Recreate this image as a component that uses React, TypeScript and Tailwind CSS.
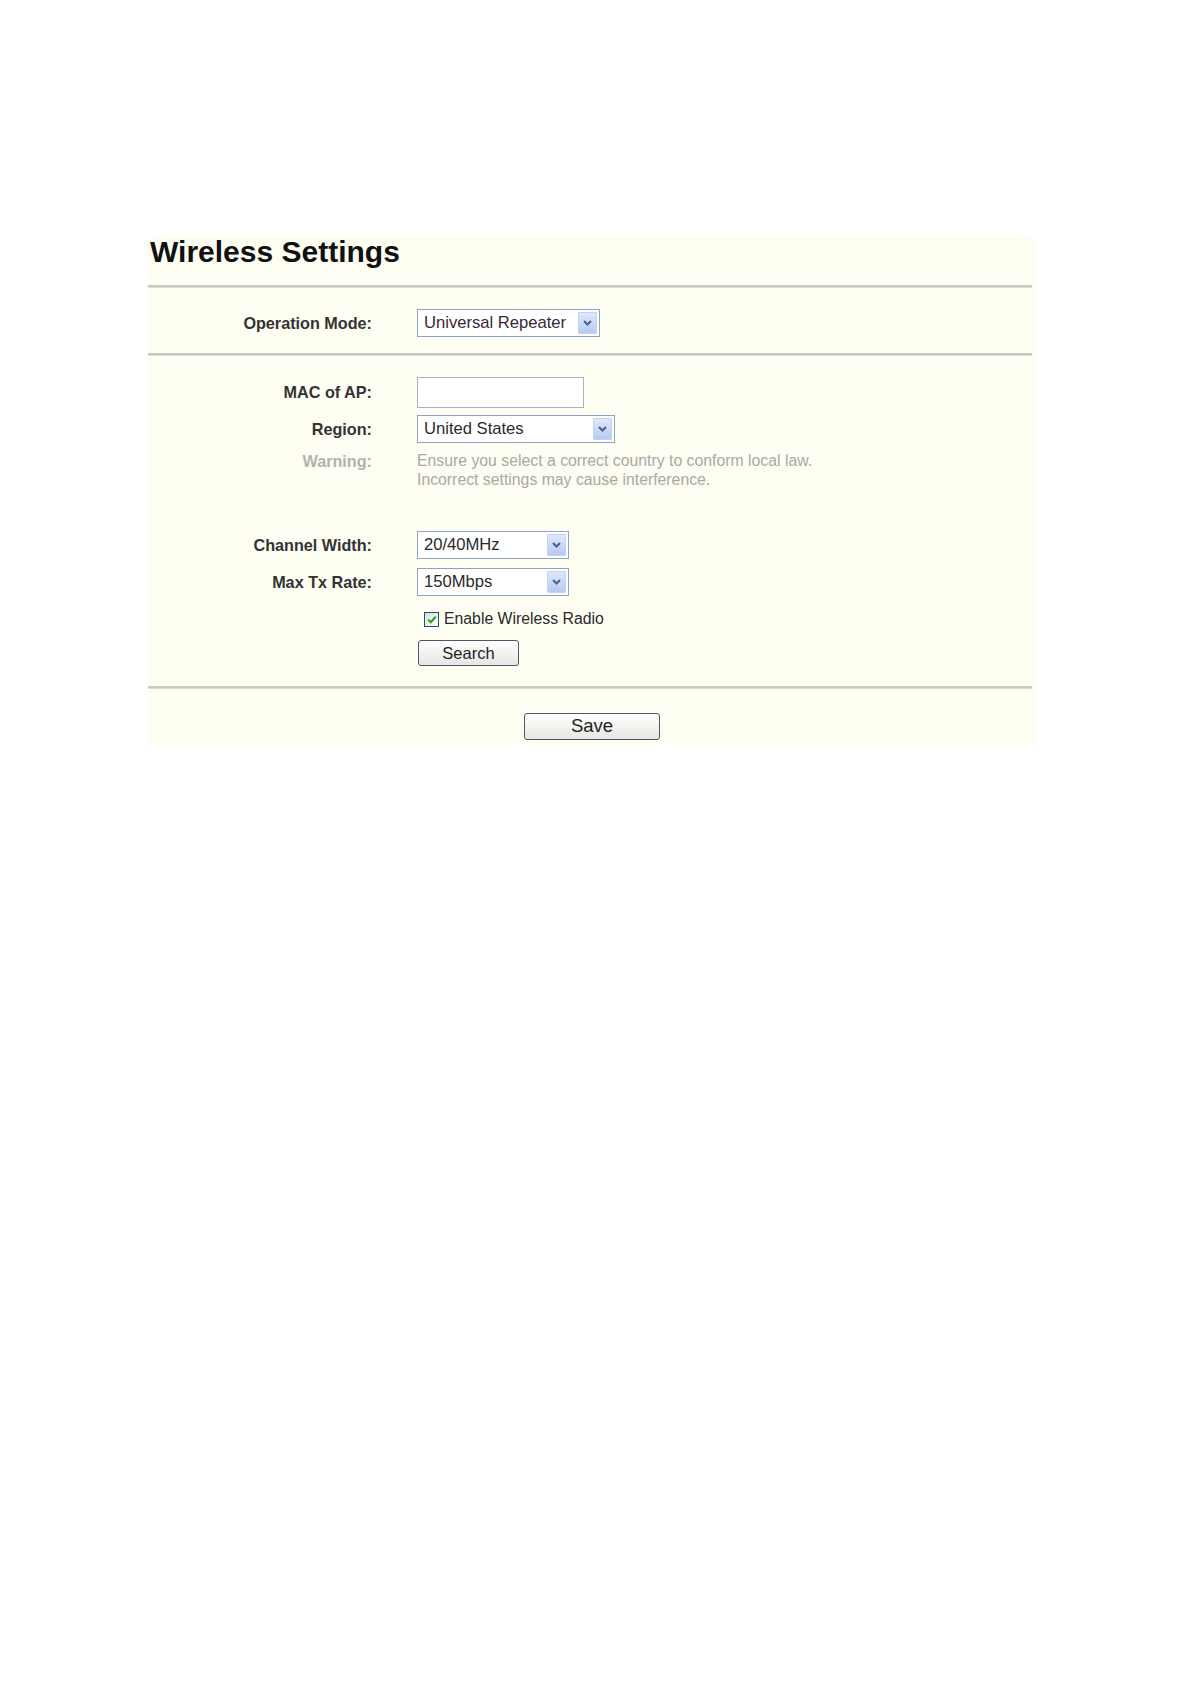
const font = { fontFamily: '"Liberation Sans", Arial, sans-serif' }

function Chevron() {
  return (
    <svg width="9" height="6" viewBox="0 0 9 6" fill="none">
      <path d="M1 1 L4.5 4.5 L8 1" stroke="#4a5f8a" strokeWidth="2" />
    </svg>
  )
}

function Select({ value, width, tone }: { value: string; width: string; tone?: string }) {
  return (
    <div
      className={`${width} h-[28px] flex items-center justify-between bg-white border border-[#8fa4c2] pl-[6px] pr-[2px]`}
    >
      <span className={`text-[16.6px] leading-none ${tone ?? "text-[#2a2a2a]"}`}>{value}</span>
      <div className="w-[19px] h-[22px] flex items-center justify-center bg-gradient-to-b from-[#dfe8fd] to-[#b7c9f4] border border-[#c3d1f3] rounded-[1px]">
        <Chevron />
      </div>
    </div>
  )
}

function Label({ children, muted }: { children: React.ReactNode; muted?: boolean }) {
  return (
    <div
      className={`text-right font-bold text-[16.2px] leading-none ${muted ? "text-[#b2b2ad]" : "text-[#333333]"}`}
    >
      {children}
    </div>
  )
}

function Rule() {
  return <div className="h-[3px] w-[884px] bg-[#c9c9c3] border-b border-[#dcdcd4]" />
}

export default function App() {
  return (
    <div className="min-h-[1684px] w-[1190px] bg-white pt-[237px] pl-[148px]" style={font}>
      <div className="w-[888px] bg-[#fefef3]">
        <div className="h-[48px] pl-[2px]">
          <h1 className="text-[30px] leading-[30px] font-bold text-[#111111]">Wireless Settings</h1>
        </div>
        <Rule />

        <div className="grid grid-cols-[224px_1fr] gap-x-[45px] items-center pt-[21px] pb-[16px]">
          <Label>Operation Mode:</Label>
          <Select value="Universal Repeater" width="w-[183px]" tone="text-[#3a2836]" />
        </div>
        <Rule />

        <div className="grid grid-cols-[224px_1fr] gap-x-[45px] items-center pt-[21px] pb-[20px]">
          <Label>MAC of AP:</Label>
          <div className="w-[167px] h-[31px] bg-white border border-[#a9b3c0]" />

          <div className="col-span-2 h-[7px]" />
          <Label>Region:</Label>
          <Select value="United States" width="w-[198px]" />

          <div className="col-span-2 h-[8px]" />
          <div className="self-start pt-[2px]">
            <Label muted>Warning:</Label>
          </div>
          <div className="text-[15.8px] leading-[19px] text-[#a9a9a4]">
            <div>Ensure you select a correct country to conform local law.</div>
            <div>Incorrect settings may cause interference.</div>
          </div>

          <div className="col-span-2 h-[42px]" />
          <Label>Channel Width:</Label>
          <Select value="20/40MHz" width="w-[152px]" />

          <div className="col-span-2 h-[9px]" />
          <Label>Max Tx Rate:</Label>
          <Select value="150Mbps" width="w-[152px]" />

          <div className="col-span-2 h-[15px]" />
          <div />
          <div className="flex items-center gap-[5px] pl-[7px] h-[16px]">
            <div className="w-[15px] h-[15px] flex items-center justify-center border border-[#1c5180] bg-gradient-to-br from-[#dcdcd7] to-white">
              <svg width="10" height="9" viewBox="0 0 10 9" fill="none">
                <path d="M1.2 4.6 L3.8 7.2 L8.8 1.6" stroke="#21a121" strokeWidth="2" />
              </svg>
            </div>
            <span className="text-[15.8px] leading-none text-[#2a2a2a]">Enable Wireless Radio</span>
          </div>

          <div className="col-span-2 h-[13px]" />
          <div />
          <div className="pl-[1px]">
            <button className="w-[101px] h-[26px] rounded-[3px] border border-[#4a5a6a] bg-gradient-to-b from-white to-[#e6e6e2] text-[16.5px] leading-none text-[#1e1e1e]">
              Search
            </button>
          </div>
        </div>
        <Rule />

        <div className="flex justify-center pt-[24px] pb-[6px]">
          <button className="w-[136px] h-[27px] rounded-[3px] border border-[#4a5a6a] bg-gradient-to-b from-white to-[#e6e6e2] text-[18.5px] leading-none text-[#1e1e1e]">
            Save
          </button>
        </div>
      </div>
    </div>
  )
}
